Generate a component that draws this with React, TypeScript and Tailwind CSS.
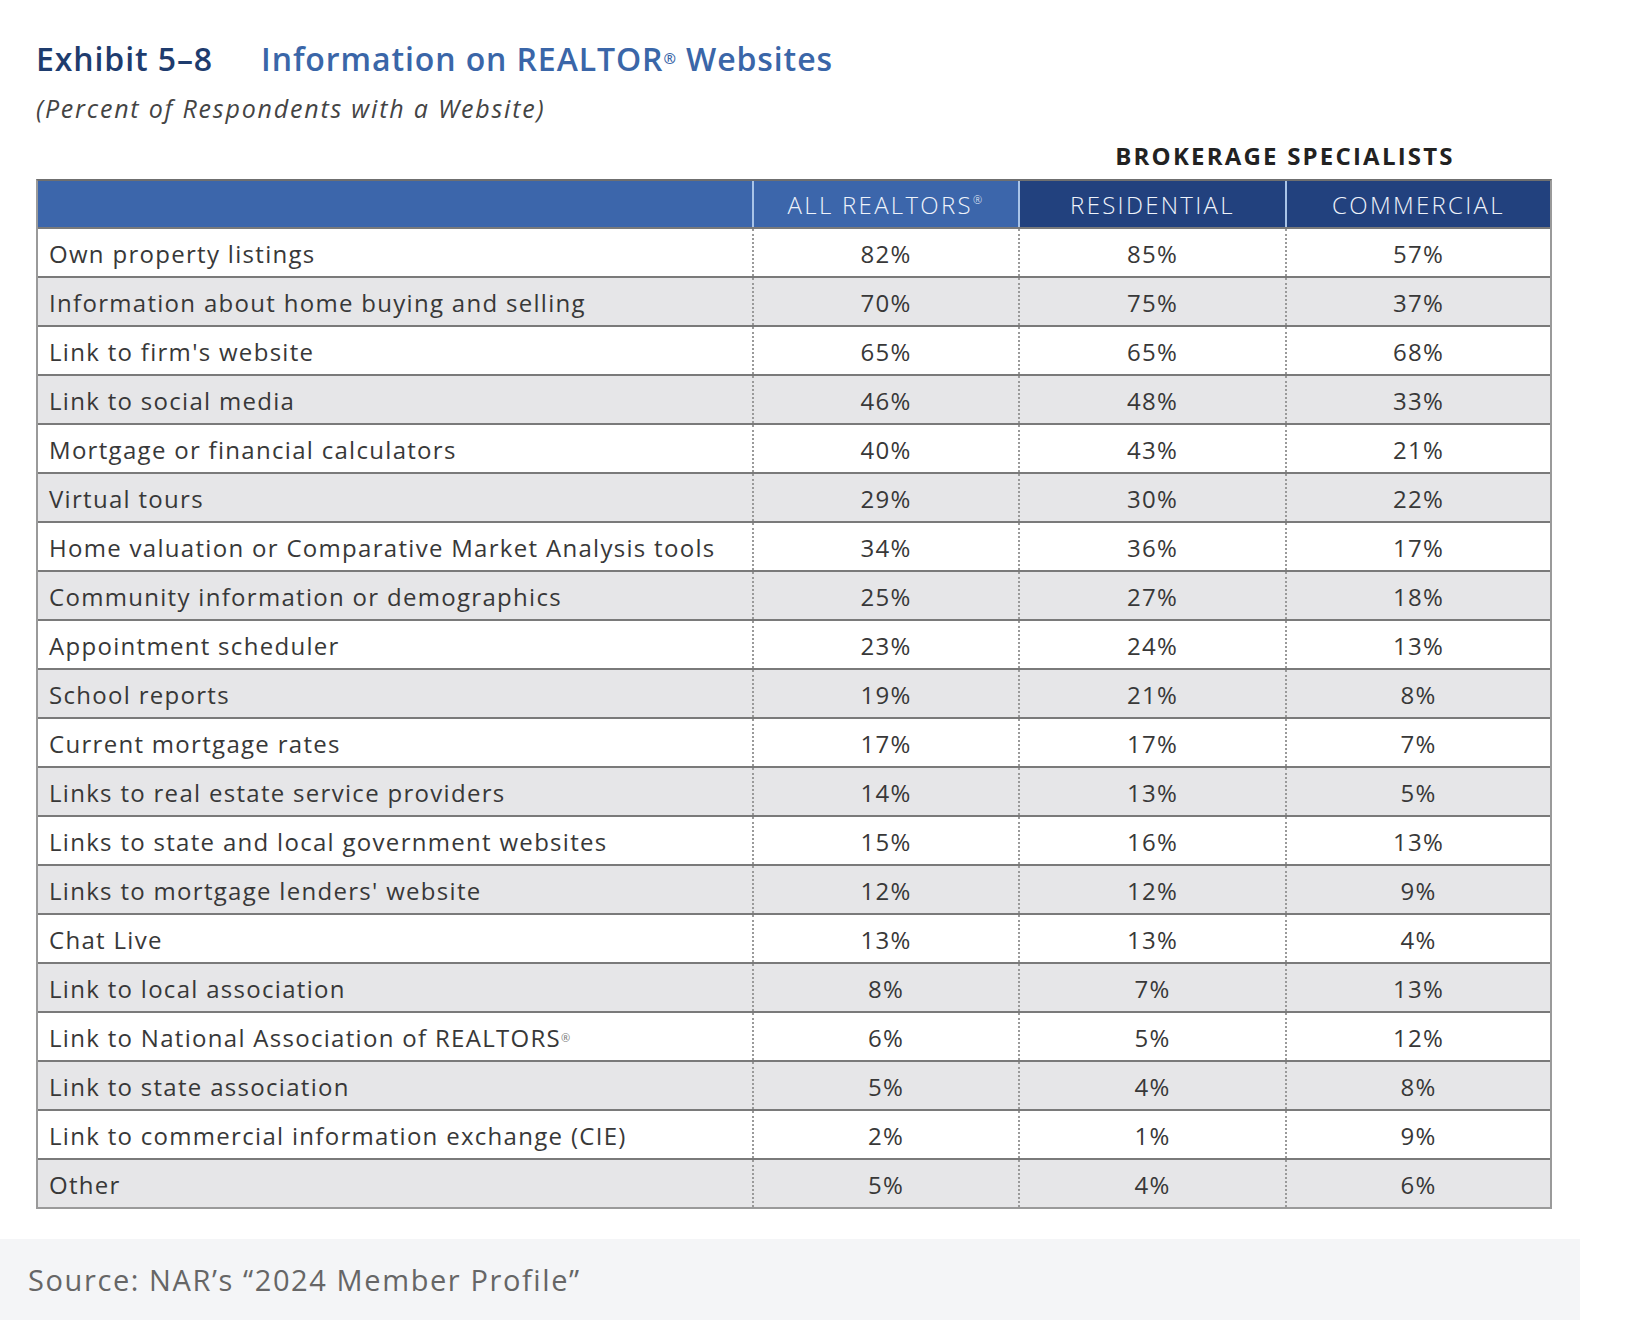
import React from "react";

const rows: [string, string, string, string][] = [
  ["Own property listings", "82%", "85%", "57%"],
  ["Information about home buying and selling", "70%", "75%", "37%"],
  ["Link to firm's website", "65%", "65%", "68%"],
  ["Link to social media", "46%", "48%", "33%"],
  ["Mortgage or financial calculators", "40%", "43%", "21%"],
  ["Virtual tours", "29%", "30%", "22%"],
  ["Home valuation or Comparative Market Analysis tools", "34%", "36%", "17%"],
  ["Community information or demographics", "25%", "27%", "18%"],
  ["Appointment scheduler", "23%", "24%", "13%"],
  ["School reports", "19%", "21%", "8%"],
  ["Current mortgage rates", "17%", "17%", "7%"],
  ["Links to real estate service providers", "14%", "13%", "5%"],
  ["Links to state and local government websites", "15%", "16%", "13%"],
  ["Links to mortgage lenders' website", "12%", "12%", "9%"],
  ["Chat Live", "13%", "13%", "4%"],
  ["Link to local association", "8%", "7%", "13%"],
  ["Link to National Association of REALTORS®", "6%", "5%", "12%"],
  ["Link to state association", "5%", "4%", "8%"],
  ["Link to commercial information exchange (CIE)", "2%", "1%", "9%"],
  ["Other", "5%", "4%", "6%"],
];

const Label = ({ text }: { text: string }) => {
  if (!text.endsWith("®")) return <>{text}</>;
  return (
    <>
      {text.slice(0, -1)}
      <sup className="text-[11px] text-[#777]">®</sup>
    </>
  );
};

export default function App() {
  return (
    <div
      className="w-[1628px] h-[1320px] bg-white text-[#383838]"
      style={{ fontFamily: '"Open Sans", "Liberation Sans", sans-serif' }}
    >
      <div className="pl-[36px] pt-[36px]">
        <div className="flex items-baseline text-[32px] font-semibold leading-[46px] tracking-[0.9px]">
          <span className="w-[225px] text-[#1e3c6e]">Exhibit 5–8</span>
          <span className="text-[#3a66a8]">
            Information on REALTOR<sup className="text-[15px]">®</sup> Websites
          </span>
        </div>
        <div className="mt-[8px] text-[25px] italic leading-[36px] tracking-[1.8px] text-[#444]">
          (Percent of Respondents with a Website)
        </div>
      </div>

      <div className="ml-[36px] mt-[11px] w-[1516px]">
        <div className="flex h-[42px]">
          <div className="w-[982px]" />
          <div className="w-[534px] text-center text-[24px] font-bold leading-[38px] tracking-[2.2px] text-[#222]">
            BROKERAGE SPECIALISTS
          </div>
        </div>

        <div className="border-2 border-[#9a9a9a] border-t-[#6f6f6f]">
          <div className="grid h-[46px] grid-cols-[714px_266px_267px_265px] text-[24px] font-light tracking-[2.3px] text-[#eef3fb]">
            <div className="bg-[#3c66ab]" />
            <div className="flex items-center justify-center border-l-2 border-[#a9c4e8] bg-[#3c66ab] pt-[2px]">
              ALL REALTORS<sup className="text-[11px]">®</sup>
            </div>
            <div className="flex items-center justify-center border-l-2 border-[#a9c4e8] bg-[#22417e] pt-[2px]">
              RESIDENTIAL
            </div>
            <div className="flex items-center justify-center border-l-2 border-[#a9c4e8] bg-[#22417e] pt-[2px]">
              COMMERCIAL
            </div>
          </div>

          {rows.map(([label, a, r, c], i) => (
            <div
              key={label}
              className={`grid h-[49px] grid-cols-[714px_266px_267px_265px] border-t-2 border-[#7a7a7a] text-[24px] tracking-[1.3px] first:border-t-0 ${
                i % 2 === 1 ? "bg-[#e6e6e8]" : "bg-white"
              }`}
            >
              <div className="flex items-center pl-[11px] pt-[3px]">
                <span>
                  <Label text={label} />
                </span>
              </div>
              <div className="flex items-center justify-center border-l-2 border-dotted border-[#9a9a9a] pt-[3px]">
                {a}
              </div>
              <div className="flex items-center justify-center border-l-2 border-dotted border-[#9a9a9a] pt-[3px]">
                {r}
              </div>
              <div className="flex items-center justify-center border-l-2 border-dotted border-[#9a9a9a] pt-[3px]">
                {c}
              </div>
            </div>
          ))}
        </div>
      </div>

      <div className="mt-[30px] flex h-[81px] w-[1580px] items-center bg-[#f4f5f7] pl-[28px] text-[29px] font-medium tracking-[1.6px] text-[#666]">
        Source: NAR’s “2024 Member Profile”
      </div>
    </div>
  );
}
